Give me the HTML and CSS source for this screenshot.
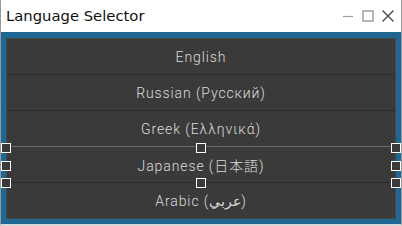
FILE: index.html
```html
<!DOCTYPE html>
<html lang="en">
<head>
  <meta charset="UTF-8" />
  <title>Language Selector</title>
  <link rel="stylesheet" href="styles.css">
</head>
<body>

  <div class="window">

    <div class="titlebar">
      <span class="title">Language Selector</span>
      <div class="controls">
        <!-- minimize -->
        <svg width="12" height="12" viewBox="0 0 12 12">
          <line x1="1" y1="6.5" x2="11" y2="6.5" stroke="#a0a0a0" stroke-width="1.2" />
        </svg>
        <!-- maximize -->
        <svg width="12" height="12" viewBox="0 0 12 12">
          <rect x="1" y="1" width="10" height="10" fill="none" stroke="#a0a0a0" stroke-width="1.5" />
        </svg>
        <!-- close -->
        <svg width="12" height="12" viewBox="0 0 12 12">
          <path d="M 0.5,0.5 L 11.5,11.5 M 11.5,0.5 L 0.5,11.5" stroke="#4a4a4a" stroke-width="1.4" />
        </svg>
      </div>
    </div>

    <div class="frame">
      <div class="list">
        <div class="row">English</div>
        <div class="row">Russian (Русский)</div>
        <div class="row">Greek (Ελληνικά)</div>
        <div class="row selected">
          Japanese (日本語)
          <div class="selection">
            <span class="handle tl"></span>
            <span class="handle tc"></span>
            <span class="handle tr"></span>
            <span class="handle ml"></span>
            <span class="handle mr"></span>
            <span class="handle bl"></span>
            <span class="handle bc"></span>
            <span class="handle br"></span>
          </div>
        </div>
        <div class="row">Arabic (عربي)</div>
      </div>
    </div>

  </div>

</body>
</html>
```

FILE: styles.css
```css
body {
  margin: 0;
  padding: 0;
  background: #fff;
}

.window {
  width: 402px;
  height: 226px;
  box-sizing: border-box;
  border: 1px solid #9a9a9a;
  border-top: none;
  border-bottom: 2px solid #d8d8d8;
  display: flex;
  flex-direction: column;
}

/* ========================== */
/* title bar */
/* ========================== */

.titlebar {
  height: 32px;
  display: flex;
  align-items: center;
  justify-content: space-between;
  padding: 0 7px 0 5px;
  background: #fff;
}

.title {
  font-family: "DejaVu Sans", sans-serif;
  font-size: 14.8px;
  color: #111;
  margin-top: -1px;
}

.controls {
  display: flex;
  gap: 8px;
  align-items: center;
}

/* ========================== */
/* blue frame + list */
/* ========================== */

.frame {
  flex: 1;
  background: #1f6894;
  padding: 6px 5px 5px 5px;
  display: flex;
}

.list {
  flex: 1;
  background: #393939;
  border: 1px solid #474747;
  display: flex;
  flex-direction: column;
}

.row {
  height: 35px;
  display: flex;
  align-items: center;
  justify-content: center;
  font-family: Roboto, "Noto Sans CJK JP", "DejaVu Sans", sans-serif;
  font-size: 14px;
  font-weight: 300;
  letter-spacing: 0.9px;
  color: #dcdcdc;
  background: #3a3a3a;
  border-top: 1px solid #2c2c2c;
}

.row:first-child {
  border-top: none;
}

.row.selected {
  position: relative;
  border-top-color: #6a6a6a;
}

/* ========================== */
/* selection handles */
/* ========================== */

.selection {
  position: absolute;
  top: 1px;
  bottom: -1px;
  left: -1px;
  right: -1px;
  pointer-events: none;
}

.handle {
  position: absolute;
  width: 10px;
  height: 10px;
  box-sizing: border-box;
  border: 1.5px solid #fff;
  background: #3a3a3a;
  transform: translate(-50%, -50%);
}

.tl { left: 0; top: 0; }
.tc { left: 50%; top: 0; }
.tr { left: 100%; top: 0; }
.ml { left: 0; top: 50%; }
.mr { left: 100%; top: 50%; }
.bl { left: 0; top: 100%; }
.bc { left: 50%; top: 100%; }
.br { left: 100%; top: 100%; }
```
